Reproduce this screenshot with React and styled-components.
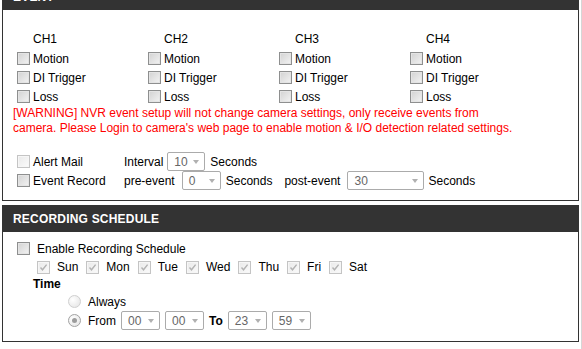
import React from "react";
import styled, { createGlobalStyle } from "styled-components";

const GlobalStyle = createGlobalStyle`
  html, body {
    margin: 0;
    padding: 0;
    background: #fff;
  }
  body {
    font-family: "Liberation Sans", Arial, sans-serif;
    font-size: 12px;
    color: #000;
  }
`;

const Page = styled.div`
  width: 581px;
  height: 349px;
  overflow: hidden;
  border-right: 1px solid #d6d6d6;
`;

// the page is scrolled a little, the EVENT title is cut off at the top
const Scroller = styled.div`
  margin-top: -17px;
`;

const Section = styled.section`
  width: 577px;
  margin-left: 2px;
  & + & {
    margin-top: 4px;
  }
`;

const SectionTitle = styled.div`
  height: 25px;
  padding: 2px 0 0 11px;
  line-height: 25px;
  background: #333;
  color: #fff;
  font-weight: bold;
  letter-spacing: 0.2px;
`;

const SectionBody = styled.div`
  border: 1px solid #333;
  border-top: none;
  padding: ${(p) => p.$pad};
`;

const ChannelGrid = styled.div`
  display: grid;
  grid-template-columns: repeat(4, 131px);
`;

const ChannelCol = styled.div`
  display: flex;
  flex-direction: column;
`;

const ChannelName = styled.div`
  height: 19px;
  line-height: 19px;
  padding-left: 16px;
`;

const Row = styled.div`
  display: flex;
  align-items: center;
  height: ${(p) => p.$h || 19}px;
  padding-left: ${(p) => p.$indent || 0}px;
  gap: ${(p) => p.$gap || 0}px;
  white-space: nowrap;
`;

const Label = styled.span`
  margin-right: ${(p) => p.$mr || 0}px;
  margin-left: ${(p) => p.$ml || 0}px;
  font-weight: ${(p) => (p.$bold ? "bold" : "normal")};
`;

const Box = styled.span`
  position: relative;
  display: inline-block;
  box-sizing: border-box;
  width: 13px;
  height: 13px;
  flex: none;
  margin-right: ${(p) => p.$mr ?? 3}px;
  border: 1px solid ${(p) => (p.$disabled ? "#c4c4c4" : "#8e8f8f")};
  background: ${(p) =>
    p.$disabled
      ? "linear-gradient(135deg, #e9e9e9 0%, #fbfbfb 100%)"
      : "linear-gradient(135deg, #d2d2d2 0%, #f3f3f3 100%)"};
  box-shadow: inset 0 0 0 1px ${(p) => (p.$disabled ? "#f6f6f6" : "#e4e4e4")};
`;

const Tick = styled.svg`
  position: absolute;
  left: 1px;
  top: 1px;
`;

function Checkbox({ disabled, checked, mr }) {
  return (
    <Box $disabled={disabled} $mr={mr}>
      {checked && (
        <Tick width="9" height="9" viewBox="0 0 9 9">
          <path d="M1.5 4.5 L3.5 6.8 L7.6 1.6" fill="none" stroke="#b3b3b3" strokeWidth="1.4" />
        </Tick>
      )}
    </Box>
  );
}

const Radio = styled.span`
  position: relative;
  display: inline-block;
  box-sizing: border-box;
  width: 13px;
  height: 13px;
  flex: none;
  margin-right: ${(p) => (p.$checked ? 2 : 7)}px;
  border-radius: 50%;
  border: 1px solid ${(p) => (p.$checked ? "#a2a2a2" : "#cfcfcf")};
  background: radial-gradient(circle at 35% 35%, #ffffff 0%, #e2e2e2 100%);
  &::after {
    content: "";
    display: ${(p) => (p.$checked ? "block" : "none")};
    position: absolute;
    left: 3px;
    top: 3px;
    width: 5px;
    height: 5px;
    border-radius: 50%;
    background: #9c9c9c;
  }
`;

const Warning = styled.div`
  margin-left: -4px;
  color: #ff0000;
  line-height: 15px;
  white-space: nowrap;
`;

const OptionsGrid = styled.div`
  display: grid;
  grid-template-columns: 107px auto;
  margin-top: 16px;
`;

const SelectBox = styled.span`
  display: inline-flex;
  align-items: center;
  justify-content: space-between;
  box-sizing: border-box;
  width: ${(p) => p.$w}px;
  height: 19px;
  padding: 0 5px 0 6px;
  border: 1px solid #ababab;
  border-radius: 2px;
  background: #fff;
  color: #666;
  font-size: 12px;
  flex: none;
`;

const Arrow = styled.span`
  width: 0;
  height: 0;
  border-left: 3.5px solid transparent;
  border-right: 3.5px solid transparent;
  border-top: 4px solid #b0b0b0;
  margin-top: 1px;
`;

function Select({ value, width }) {
  return (
    <SelectBox $w={width}>
      {value}
      <Arrow />
    </SelectBox>
  );
}

const channels = ["CH1", "CH2", "CH3", "CH4"];
const triggers = ["Motion", "DI Trigger", "Loss"];
const days = ["Sun", "Mon", "Tue", "Wed", "Thu", "Fri", "Sat"];

export default function App() {
  return (
    <Page>
      <GlobalStyle />
      <Scroller>
        <Section>
          <SectionTitle>EVENT</SectionTitle>
          <SectionBody $pad="20px 0 10px 14px">
            <ChannelGrid>
              {channels.map((ch) => (
                <ChannelCol key={ch}>
                  <ChannelName>{ch}</ChannelName>
                  {triggers.map((t) => (
                    <Row key={t}>
                      <Checkbox />
                      {t}
                    </Row>
                  ))}
                </ChannelCol>
              ))}
            </ChannelGrid>
            <Warning>
              [WARNING] NVR event setup will not change camera settings, only receive events from
              <br />
              camera. Please Login to camera's web page to enable motion &amp; I/O detection related settings.
            </Warning>
            <OptionsGrid>
              <Row>
                <Checkbox disabled />
                Alert Mail
              </Row>
              <Row $gap={4}>
                Interval
                <Select value="10" width={38} />
                <Label $ml={1}>Seconds</Label>
              </Row>
              <Row>
                <Checkbox />
                Event Record
              </Row>
              <Row $gap={4}>
                <Label $mr={3}>pre-event</Label>
                <Select value="0" width={39} />
                <Label $ml={1}>Seconds</Label>
                <Label $ml={8} $mr={3}>post-event</Label>
                <Select value="30" width={77} />
                Seconds
              </Row>
            </OptionsGrid>
          </SectionBody>
        </Section>

        <Section>
          <SectionTitle>RECORDING SCHEDULE</SectionTitle>
          <SectionBody $pad="7px 0 11px 14px">
            <Row>
              <Checkbox mr={7} />
              Enable Recording Schedule
            </Row>
            <Row $h={18} $indent={20}>
              {days.map((d) => (
                <React.Fragment key={d}>
                  <Checkbox disabled checked mr={7} />
                  <Label $mr={8}>{d}</Label>
                </React.Fragment>
              ))}
            </Row>
            <Row $h={16} $indent={16}>
              <Label $bold>Time</Label>
            </Row>
            <Row $indent={51}>
              <Radio />
              Always
            </Row>
            <Row $indent={51} $gap={5}>
              <Radio $checked />
              From
              <Select value="00" width={39} />
              <Select value="00" width={39} />
              <Label $bold>To</Label>
              <Select value="23" width={39} />
              <Select value="59" width={39} />
            </Row>
          </SectionBody>
        </Section>
      </Scroller>
    </Page>
  );
}
